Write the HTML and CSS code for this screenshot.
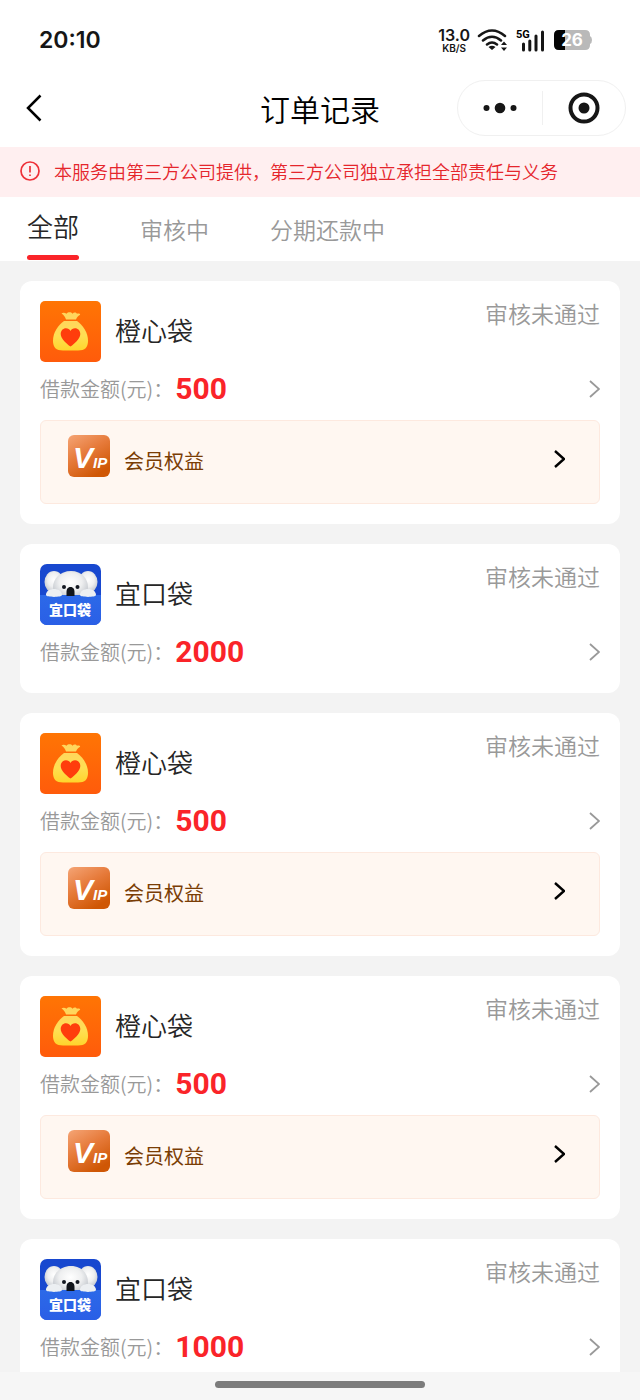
FILE: index.html
```html
<!DOCTYPE html>
<html lang="zh-CN">
<head>
<meta charset="utf-8">
<meta name="viewport" content="width=device-width, initial-scale=1">
<title>订单记录</title>
<link rel="stylesheet" href="styles.css">
</head>
<body>
<svg class="sprite" aria-hidden="true">
  <defs>
    <linearGradient id="bag-bg" x1="0" y1="0" x2="0" y2="1"><stop offset="0" stop-color="#ff7504"/><stop offset="1" stop-color="#ff5b0b"/></linearGradient>
    <linearGradient id="bag-fill" x1="0" y1="0" x2="0" y2="1"><stop offset="0" stop-color="#ffd65c"/><stop offset=".5" stop-color="#ffdf52"/><stop offset="1" stop-color="#ffd52c"/></linearGradient>
    <linearGradient id="vip-bg" x1="0" y1="0" x2=".6" y2="1"><stop offset="0" stop-color="#f5a576"/><stop offset=".5" stop-color="#e67a3a"/><stop offset="1" stop-color="#cf5705"/></linearGradient>
    <linearGradient id="koala-panel" x1="0" y1="0" x2="0" y2="1"><stop offset="0" stop-color="#2c69e8"/><stop offset="1" stop-color="#2a5fe6"/></linearGradient>
    <radialGradient id="koala-fur" cx=".5" cy=".4" r=".65"><stop offset="0" stop-color="#ffffff"/><stop offset=".5" stop-color="#eeeff0"/><stop offset="1" stop-color="#b9bec5"/></radialGradient>
    <clipPath id="tile"><rect width="61" height="61" rx="7"/></clipPath>
  </defs>
  <symbol id="logo-bag" viewBox="0 0 61 61">
    <rect width="61" height="61" rx="5" fill="url(#bag-bg)"/>
    <path d="M21.500 12.500c1.500-1.300 3.500-.9 5 .3 1.500-1.800 4.500-2 6 0 1.200-1.700 3.500-1.600 4.500 0 1.500-.8 3-.3 3.200 1-1.700.7-3.200 2.200-4.200 4.700h-10c-.8-2.500-2-4.500-4.500-6z" fill="#ffd65c"/>
    <path d="M24 20h13c6 4 11 12 11 19.500 0 7-3 10-10 10H23c-7 0-10-3-10-10C13 32 18 24 24 20z" fill="url(#bag-fill)"/>
    <path d="M30.500 45.500c-4-2.700-9.800-7.800-9.800-12.500 0-3.500 2.300-5.800 5.300-5.800 2 0 3.600 1 4.500 2.800.9-1.800 2.500-2.800 4.500-2.800 3 0 5.300 2.300 5.300 5.800 0 4.700-5.800 9.800-9.800 12.500z" fill="#ff3d0c"/>
  </symbol>
  <symbol id="logo-koala" viewBox="0 0 61 61">
    <g clip-path="url(#tile)">
      <rect width="61" height="61" fill="#1848cf"/>
      <ellipse cx="14" cy="18" rx="9.500" ry="11" fill="url(#koala-fur)"/>
      <ellipse cx="48" cy="18" rx="9.500" ry="11" fill="url(#koala-fur)"/>
      <path d="M31 7c11 0 17 8 17 16 0 6-4 10-8 12H21c-4-2-8-6-8-12 0-8 7-16 18-16z" fill="url(#koala-fur)"/>
      <rect y="31" width="61" height="30" fill="url(#koala-panel)"/>
      <path d="M6 31c0-4 4-6 8-6s8 2 8 6c0 2.500-16 2.500-16 0zM40 31c0-4 4-6 8-6s8 2 8 6c0 2.500-16 2.500-16 0z" fill="#eceff2"/>
      <circle cx="24" cy="23" r="2" fill="#141922"/>
      <circle cx="37.500" cy="23" r="2" fill="#141922"/>
      <path d="M30.500 23c3 0 4 2.500 4 5v4h-8v-4c0-2.500 1-5 4-5z" fill="#11151b"/>
    </g>
  </symbol>
  <symbol id="logo-vip" viewBox="0 0 42 42">
    <rect width="42" height="42" rx="6" fill="url(#vip-bg)"/>
  </symbol>
  <symbol id="chevron" viewBox="0 0 12 18"><path d="M2 1l9 8-9 8" fill="none" stroke="currentColor"/></symbol>
</svg>

<div class="screen">
  <div class="status-bar">
    <span class="clock">20:10</span>
    <div class="indicators">
      <div class="speed"><span class="speed-value">13.0</span><span class="speed-unit">KB/S</span></div>
      <svg class="wifi" viewBox="0 0 32 24" aria-hidden="true">
        <g fill="none" stroke="#161616" stroke-width="2.500" stroke-linecap="round"><path d="M2 8q13-11 26 0M6 12.500q9-7.500 18 0M10 16.500q5-4 10 0"/></g>
        <path d="M11.500 19q3.500-2.500 7 0L15 22zM24 17l3-3.500 3 3.500zM24 19.500l3 3.500 3-3.500z" fill="#161616"/>
      </svg>
      <svg class="signal" viewBox="0 0 30 24" aria-hidden="true">
        <text x="0" y="10" class="signal-text">5G</text>
        <path d="M7.500 16v6M13.800 13v9M20 8v14M26.500 4v18" stroke="#161616" stroke-width="3" stroke-linecap="round"/>
      </svg>
      <svg class="battery" viewBox="0 0 40 22" aria-hidden="true">
        <path d="M6 1h26q5 0 5 5v1q2 1 2 4t-2 4v1q0 5-5 5H6q-5 0-5-5V6q0-5 5-5z" fill="#b9b9b9"/>
        <path d="M12 1H6Q1 1 1 6v10q0 5 5 5h6z" fill="#050505"/>
        <text x="19" y="17" text-anchor="middle" class="battery-text">26</text>
      </svg>
    </div>
  </div>

  <header class="nav">
    <button class="back" aria-label="返回"><svg viewBox="0 0 16 28"><path d="M14.500 1.500L2 14l12.500 12.500" fill="none" stroke="#000" stroke-width="2.500"/></svg></button>
    <h1 class="title">订单记录</h1>
    <div class="capsule">
      <button aria-label="更多"><svg class="dots" viewBox="0 0 34 12"><circle cx="3.500" cy="6" r="3"/><circle cx="17" cy="6" r="5.300"/><circle cx="30.500" cy="6" r="3"/></svg></button>
      <button aria-label="关闭"><svg class="target" viewBox="0 0 32 32"><circle cx="16" cy="16" r="13.500" fill="none" stroke="#161616" stroke-width="4"/><circle cx="16" cy="16" r="5.500"/></svg></button>
    </div>
  </header>

  <div class="notice">
    <svg viewBox="0 0 20 20" aria-hidden="true"><circle cx="10" cy="10" r="9" fill="none" stroke="#ee3038" stroke-width="1.700"/><path d="M10 5v6.500M10 13.500v1.600" stroke="#ee3038" stroke-width="1.700"/></svg>
    <span>本服务由第三方公司提供，第三方公司独立承担全部责任与义务</span>
  </div>

  <nav class="tabs">
    <button class="tab tab-active">全部</button>
    <button class="tab">审核中</button>
    <button class="tab">分期还款中</button>
  </nav>

  <main class="orders">
    <article class="card">
      <div class="card-head"><svg class="logo"><use href="#logo-bag"/></svg><h2 class="name">橙心袋</h2><span class="state">审核未通过</span></div>
      <div class="amount-row"><span class="label">借款金额(元)：</span><strong class="amount">500</strong><svg class="more"><use href="#chevron"/></svg></div>
      <button class="vip"><svg class="vip-logo"><use href="#logo-vip"/><text x="5" y="33" class="vip-text">V<tspan class="vip-small">IP</tspan></text></svg><span>会员权益</span><svg class="vip-more"><use href="#chevron"/></svg></button>
    </article>
    <article class="card">
      <div class="card-head"><svg class="logo"><use href="#logo-koala"/><text x="30" y="51" text-anchor="middle" class="koala-text">宜口袋</text></svg><h2 class="name">宜口袋</h2><span class="state">审核未通过</span></div>
      <div class="amount-row"><span class="label">借款金额(元)：</span><strong class="amount">2000</strong><svg class="more"><use href="#chevron"/></svg></div>
    </article>
    <article class="card">
      <div class="card-head"><svg class="logo"><use href="#logo-bag"/></svg><h2 class="name">橙心袋</h2><span class="state">审核未通过</span></div>
      <div class="amount-row"><span class="label">借款金额(元)：</span><strong class="amount">500</strong><svg class="more"><use href="#chevron"/></svg></div>
      <button class="vip"><svg class="vip-logo"><use href="#logo-vip"/><text x="5" y="33" class="vip-text">V<tspan class="vip-small">IP</tspan></text></svg><span>会员权益</span><svg class="vip-more"><use href="#chevron"/></svg></button>
    </article>
    <article class="card">
      <div class="card-head"><svg class="logo"><use href="#logo-bag"/></svg><h2 class="name">橙心袋</h2><span class="state">审核未通过</span></div>
      <div class="amount-row"><span class="label">借款金额(元)：</span><strong class="amount">500</strong><svg class="more"><use href="#chevron"/></svg></div>
      <button class="vip"><svg class="vip-logo"><use href="#logo-vip"/><text x="5" y="33" class="vip-text">V<tspan class="vip-small">IP</tspan></text></svg><span>会员权益</span><svg class="vip-more"><use href="#chevron"/></svg></button>
    </article>
    <article class="card">
      <div class="card-head"><svg class="logo"><use href="#logo-koala"/><text x="30" y="51" text-anchor="middle" class="koala-text">宜口袋</text></svg><h2 class="name">宜口袋</h2><span class="state">审核未通过</span></div>
      <div class="amount-row"><span class="label">借款金额(元)：</span><strong class="amount">1000</strong><svg class="more"><use href="#chevron"/></svg></div>
    </article>
  </main>

  <footer class="home-bar"><span class="home-indicator"></span></footer>
</div>
</body>
</html>
```
FILE: styles.css
```css
* {
  box-sizing: border-box;
}

body {
  margin: 0;
  background: #f3f3f3;
  color: #262626;
  font-family: "Noto Sans CJK SC", sans-serif;
  font-weight: 350;
}

button {
  margin: 0;
  padding: 0;
  border: 0;
  background: none;
  color: inherit;
  font: inherit;
  cursor: pointer;
}

h1,
h2 {
  margin: 0;
  font-weight: 350;
}

svg {
  display: block;
  flex: none;
}

.sprite {
  position: absolute;
  width: 0;
  height: 0;
}

.screen {
  display: flex;
  flex-direction: column;
  height: 100vh;
}

/* Status bar */
.status-bar {
  display: flex;
  flex: none;
  align-items: center;
  justify-content: space-between;
  height: 80px;
  padding: 0 47px 0 39px;
  background: #fff;
}

.clock {
  color: #161616;
  font: 600 23px/28px Inter, sans-serif;
}

.indicators {
  display: flex;
  align-items: center;
  gap: 7px;
}

.speed {
  display: flex;
  flex-direction: column;
  align-items: center;
  color: #161616;
  font-family: Inter, sans-serif;
  font-weight: 600;
}

.speed-value {
  font-size: 16px;
  line-height: 16px;
}

.speed-unit {
  font-size: 10px;
  line-height: 10px;
}

.wifi {
  width: 32px;
  height: 24px;
}

.signal {
  width: 30px;
  height: 24px;
}

.battery {
  width: 40px;
  height: 22px;
}

.signal-text {
  font: 700 11px Roboto, sans-serif;
}

.battery-text {
  fill: #fff;
  font: 700 17px Inter, sans-serif;
}

/* Navigation */
.nav {
  display: grid;
  flex: none;
  grid-template-columns: 1fr auto 1fr;
  align-items: center;
  height: 67px;
  padding: 0 14px 11px;
  background: #fff;
}

.back {
  justify-self: start;
  padding: 0 12px;
}

.back svg {
  width: 16px;
  height: 28px;
}

.title {
  color: #000;
  font-size: 30px;
  line-height: 40px;
}

.capsule {
  display: grid;
  grid-template-columns: 1fr 1fr;
  justify-self: end;
  width: 169px;
  height: 56px;
  padding: 10px 0;
  border: 1px solid #f0f0f0;
  border-radius: 28px;
  fill: #161616;
}

.capsule button {
  display: grid;
  place-items: center;
}

.capsule button + button {
  border-left: 1px solid #f0f0f0;
}

.dots {
  width: 34px;
  height: 12px;
}

.target {
  width: 32px;
  height: 32px;
}

/* Notice */
.notice {
  display: flex;
  flex: none;
  align-items: center;
  gap: 14px;
  height: 50px;
  padding: 0 20px 2px;
  background: #ffeff0;
  color: #e5262c;
  font-size: 18px;
  line-height: 24px;
}

.notice svg {
  width: 20px;
  height: 20px;
}

/* Tabs */
.tabs {
  display: flex;
  flex: none;
  gap: 61px;
  height: 64px;
  padding: 0 27px;
  background: #fff;
  color: #999;
  font-size: 23px;
  line-height: 62px;
}

.tab-active {
  display: flex;
  flex-direction: column;
  color: #262626;
  font-size: 26px;
  line-height: 58px;
}

.tab-active::after {
  width: 100%;
  height: 5px;
  border-radius: 3px;
  background: #fa2429;
  content: "";
}

/* Orders */
.orders {
  display: flex;
  flex: 1;
  flex-direction: column;
  gap: 20px;
  min-height: 0;
  padding: 20px;
  overflow-y: auto;
  scrollbar-width: none;
}

.card {
  flex: none;
  padding: 20px;
  border-radius: 12px;
  background: #fff;
}

.card-head {
  display: flex;
  align-items: center;
  gap: 14px;
}

.logo {
  width: 61px;
  height: 61px;
}

.name {
  flex: 1;
  padding-bottom: 4px;
  font-size: 26px;
  line-height: 36px;
}

.state {
  align-self: flex-start;
  color: #999;
  font-size: 23px;
  line-height: 24px;
}

.amount-row {
  display: flex;
  align-items: center;
  gap: 2px;
  height: 40px;
  margin-top: 8px;
  padding-bottom: 2px;
}

.label {
  color: #999;
  font-size: 20px;
  line-height: 28px;
}

.amount {
  flex: 1;
  color: #fa2429;
  font: 700 30px/36px Roboto, sans-serif;
}

.more {
  width: 12px;
  height: 18px;
  color: #999;
  stroke-width: 1.8;
}

.vip {
  display: flex;
  align-items: flex-start;
  gap: 14px;
  width: 100%;
  height: 84px;
  margin-top: 10px;
  padding: 14px 34px 0 27px;
  border: 1px solid #fde9df;
  border-radius: 6px;
  background: #fff7f1;
  color: #7a3d05;
  font-size: 20px;
  font-weight: 400;
  line-height: 52px;
  text-align: left;
}

.vip span {
  flex: 1;
}

.vip-logo {
  width: 42px;
  height: 42px;
}

.vip-more {
  width: 12px;
  height: 18px;
  margin-top: 15px;
  color: #000;
  stroke-width: 2.4;
}

.vip-text {
  fill: #fff;
  font: italic 700 30px "Liberation Sans", sans-serif;
}

.vip-small {
  font-size: 15px;
}

.koala-text {
  fill: #fff;
  font: 900 14px "Noto Sans CJK SC", sans-serif;
}

/* Home indicator */
.home-bar {
  display: flex;
  flex: none;
  align-items: center;
  justify-content: center;
  height: 28px;
  padding-bottom: 4px;
  background: #f6f6f6;
}

.home-indicator {
  width: 210px;
  height: 7px;
  border-radius: 4px;
  background: #7c7c7c;
}
```
